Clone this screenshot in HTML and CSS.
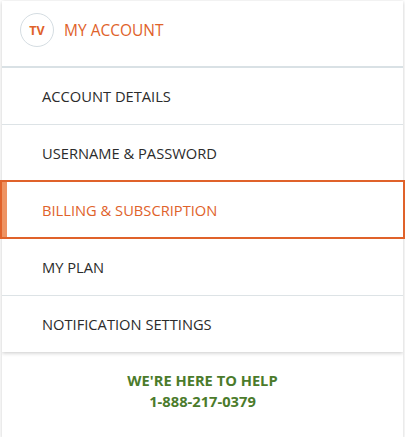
FILE: index.html
```html
<!DOCTYPE html>
<html lang="en">
<head>
    <meta charset="UTF-8">
    <meta name="viewport" content="width=device-width, initial-scale=1.0">
    <title>My Account</title>
    <link rel="stylesheet" href="styles.css">
</head>
<body>
    <div class="wrapper">
        <div class="account-menu">
            <div class="menu-header">
                <span class="avatar">TV</span>
                <span class="menu-title">MY ACCOUNT</span>
            </div>
            <ul class="menu-list">
                <li><a href="#">ACCOUNT DETAILS</a></li>
                <li><a href="#">USERNAME &amp; PASSWORD</a></li>
                <li class="active"><a href="#">BILLING &amp; SUBSCRIPTION</a></li>
                <li><a href="#">MY PLAN</a></li>
                <li><a href="#">NOTIFICATION SETTINGS</a></li>
            </ul>
        </div>

        <div class="help-box">
            <p>WE'RE HERE TO HELP</p>
            <p>1-888-217-0379</p>
        </div>
    </div>
</body>
</html>
```

FILE: styles.css
```css
body {
    font-family: "Open Sans", Arial, sans-serif;
    margin: 0;
    padding: 0;
    background-color: #ffffff;
}

.wrapper {
    padding: 1px 2px 2px 2px;
}

.account-menu {
    background-color: #fff;
    box-shadow: 0 1px 4px rgba(0, 0, 0, 0.22);
    position: relative;
    z-index: 1;
}

.menu-header {
    display: flex;
    align-items: center;
    padding: 12px 0 19px 18px;
    border-bottom: 2px solid #d9e1e5;
}

.avatar {
    width: 32px;
    height: 32px;
    border: 1px solid #d5dde2;
    border-radius: 50%;
    display: flex;
    align-items: center;
    justify-content: center;
    font-size: 12.5px;
    font-weight: bold;
    color: #e0622a;
}

.menu-title {
    margin-left: 10px;
    font-size: 15.5px;
    color: #e0622a;
}

.menu-list {
    list-style: none;
    margin: 0;
    padding: 0;
}

.menu-list li {
    border-bottom: 1px solid #dde3e6;
}

.menu-list li:last-child {
    border-bottom: none;
}

.menu-list a {
    display: flex;
    align-items: center;
    height: 56px;
    padding-left: 40px;
    font-size: 14.7px;
    color: #2b2b2b;
    text-decoration: none;
}

.menu-list li.active {
    margin: -2px -2px 0 -2px;
    border: 2px solid #e0622a;
    position: relative;
}

.menu-list li.active a {
    height: 55px;
    color: #e0622a;
    border-left: 5px solid #ee9362;
    padding-left: 35px;
}

.help-box {
    background-color: #fff;
    box-shadow: 0 1px 4px rgba(0, 0, 0, 0.2);
    text-align: center;
    padding: 18px 0 26px;
    color: #4b7b2b;
    font-weight: bold;
    font-size: 14.7px;
}

.help-box p {
    margin: 0;
    line-height: 21px;
}
```
